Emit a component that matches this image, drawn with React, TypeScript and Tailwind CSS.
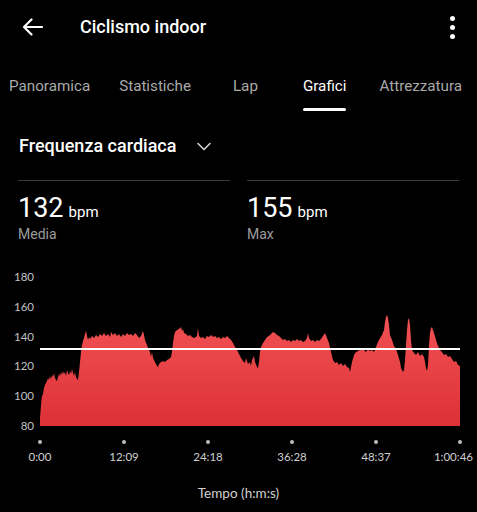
import React from "react";

const P: [number, number][] = [
  [40,426],[40,418],[41,405],[42,396],[43,394],[44,388],[45,385],[46,383],[47,381],[48,378],[49,380],[50,376],[51,379],[52,375],[53,377],[54,373],[55,378],[56,380],[57,381],[58,377],[59,374],[60,376],[61,372],[62,375],[63,371],[64,374],[65,372],[66,376],[67,370],[68,373],[69,375],[70,371],[71,374],[72,369],[73,373],[74,376],[75,372],[76,377],[77,379],[78,380],[79,372],[80,362],[81,352],[82,345],[83,341],[84,338],[85,334],[86,331],[87,336],[88,340],[89,337],[90,339],[92,336],[94,338],[96,335],[98,337],[100,334],[102,336],[104,333],[106,336],[108,334],[110,337],[111,332],[113,335],[115,333],[117,336],[119,334],[121,337],[123,334],[125,336],[127,333],[129,335],[131,334],[133,336],[135,333],[137,335],[139,338],[141,336],[143,331],[144,335],[145,340],[147,345],[149,350],[150,352],[151,357],[152,352],[153,358],[155,362],[157,366],[158,367],[159,364],[161,362],[163,361],[165,362],[167,360],[169,359],[171,357],[172,352],[173,343],[174,336],[175,332],[177,330],[179,329],[181,327],[182,331],[183,329],[184,333],[186,334],[188,336],[190,335],[192,337],[194,338],[196,337],[197,336],[198,328],[199,336],[201,338],[203,337],[205,339],[207,336],[209,337],[211,335],[213,337],[215,336],[217,338],[219,337],[221,339],[223,337],[225,338],[227,336],[229,338],[231,340],[233,343],[235,347],[237,350],[239,354],[241,358],[243,361],[245,363],[246,358],[248,364],[250,362],[251,366],[252,360],[254,356],[255,362],[257,367],[258,368],[259,362],[260,352],[261,347],[263,343],[265,340],[267,337],[269,336],[271,334],[273,332],[275,333],[277,335],[279,336],[281,338],[283,340],[285,339],[287,341],[289,340],[291,342],[293,340],[295,341],[297,339],[299,341],[301,340],[303,342],[305,341],[307,338],[308,333],[309,338],[311,341],[313,340],[315,342],[317,340],[319,341],[321,339],[323,336],[325,333],[327,338],[329,343],[331,352],[333,360],[335,363],[337,362],[339,365],[341,363],[343,366],[345,364],[347,367],[349,368],[350,372],[352,362],[354,355],[356,352],[358,351],[360,350],[362,349],[364,350],[366,352],[368,349],[370,351],[372,350],[374,352],[376,347],[378,342],[380,338],[382,335],[384,330],[385,322],[386,317],[387,315],[388,318],[389,325],[390,335],[392,340],[394,346],[396,349],[398,355],[400,362],[401,368],[403,372],[404,370],[405,360],[406,345],[407,330],[408,320],[409,318],[410,325],[411,340],[412,350],[414,353],[416,355],[418,352],[420,356],[422,354],[424,357],[425,362],[426,368],[427,371],[428,365],[429,345],[430,333],[431,328],[432,327],[434,333],[436,340],[438,346],[440,350],[442,352],[444,355],[446,354],[448,357],[450,356],[452,359],[454,362],[456,361],[458,365],[460,366],[460,426],
];

const pts = P.map(([x, y]) => `${x - 40},${y - 270}`).join(" ");

const tabs = [
  { label: "Panoramica", ml: "ml-[9px]", active: false },
  { label: "Statistiche", ml: "ml-[29px]", active: false },
  { label: "Lap", ml: "ml-[42px]", active: false },
  { label: "Grafici", ml: "ml-[45px]", active: true },
  { label: "Attrezzatura", ml: "ml-[33px]", active: false },
];

const xLabels = ["0:00", "12:09", "24:18", "36:28", "48:37"];

export default function App() {
  return (
    <div
      className="w-[477px] h-[512px] bg-black text-white overflow-hidden"
      style={{ fontFamily: "Roboto, 'Noto Sans', sans-serif" }}
    >
      {/* Header */}
      <div className="h-[54px] flex items-center">
        <svg className="ml-[22px]" width="21" height="18" viewBox="0 0 21 18" fill="none">
          <path d="M20 9H2 M9.5 1.5 L2 9 L9.5 16.5" stroke="white" strokeWidth="2.2" strokeLinecap="round" strokeLinejoin="round" />
        </svg>
        <div className="ml-[37px] text-[18px] leading-[24px] font-medium">Ciclismo indoor</div>
        <div className="ml-auto mr-[22px] flex flex-col gap-[4px]">
          <div className="w-[5px] h-[5px] rounded-full bg-white" />
          <div className="w-[5px] h-[5px] rounded-full bg-white" />
          <div className="w-[5px] h-[5px] rounded-full bg-white" />
        </div>
      </div>

      {/* Tabs */}
      <div className="h-[58px] flex items-start pt-[22px] whitespace-nowrap">
        {tabs.map((t) => (
          <div key={t.label} className={`${t.ml} flex flex-col`}>
            <div className={`text-[15.2px] leading-[20px] ${t.active ? "text-white" : "text-[#a9a9a9]"}`}>{t.label}</div>
            {t.active && <div className="mt-[12px] h-[3px] rounded-full bg-white" />}
          </div>
        ))}
      </div>

      {/* Metric selector */}
      <div className="mt-[22px] flex items-center pl-[19px]">
        <div className="text-[18px] leading-[24px] font-medium">Frequenza cardiaca</div>
        <svg className="ml-[21px]" width="14" height="9" viewBox="0 0 14 9" fill="none">
          <path d="M1 1.5 L7 7.5 L13 1.5" stroke="#d8d8d8" strokeWidth="1.5" strokeLinecap="round" strokeLinejoin="round" />
        </svg>
      </div>

      {/* Stats */}
      <div className="mt-[22px] px-[18px] grid grid-cols-2 gap-x-[17px]">
        {[
          { v: "132", l: "Media" },
          { v: "155", l: "Max" },
        ].map((s) => (
          <div key={s.l} className="flex flex-col">
            <div className="h-px bg-[#3c3c3c]" />
            <div className="mt-[12px] flex items-baseline">
              <span className="text-[27px] leading-[30px]">{s.v}</span>
              <span className="ml-[5px] text-[15px] leading-[20px]">bpm</span>
            </div>
            <div className="mt-[2px] text-[14px] leading-[18px] text-[#9c9c9c]">{s.l}</div>
          </div>
        ))}
      </div>

      {/* Chart */}
      <div
        className="mt-[27px] flex"
        style={{ fontFamily: "Lato, 'Open Sans', sans-serif" }}
      >
        <div className="w-[34px] h-[163px] flex flex-col justify-between items-end text-[11.5px] leading-[14px] text-[#c2c2c2]">
          {["180", "160", "140", "120", "100", "80"].map((l) => (
            <div key={l}>{l}</div>
          ))}
        </div>
        <svg className="ml-[6px]" width="420" height="163" viewBox="0 0 420 163">
          <defs>
            <linearGradient id="hr" x1="0" y1="0" x2="0" y2="1" gradientUnits="objectBoundingBox">
              <stop offset="0" stopColor="#f25254" />
              <stop offset="1" stopColor="#dc3136" />
            </linearGradient>
          </defs>
          <polygon points={pts} fill="url(#hr)" />
          <rect x="0" y="78" width="420" height="2" fill="#ffffff" />
        </svg>
      </div>

      {/* X axis */}
      <div
        style={{ fontFamily: "Lato, 'Open Sans', sans-serif" }}
      >
        <div className="mt-[7px] ml-[38px] w-[424px] flex justify-between">
          {[0, 1, 2, 3, 4, 5].map((i) => (
            <div key={i} className="w-[4px] h-[4px] rounded-full bg-[#bdbdbd]" />
          ))}
        </div>
        <div className="mt-[6px] ml-[12px] flex gap-[28px] text-[11.5px] leading-[14px] text-[#cfcfcf]">
          {xLabels.map((l) => (
            <div key={l} className="w-[56px] text-center">{l}</div>
          ))}
          <div className="w-[41px] text-right">1:00:46</div>
        </div>
        <div className="mt-[20px] text-center text-[13.5px] leading-[18px] text-[#d0d0d0]">Tempo (h:m:s)</div>
      </div>
    </div>
  );
}
